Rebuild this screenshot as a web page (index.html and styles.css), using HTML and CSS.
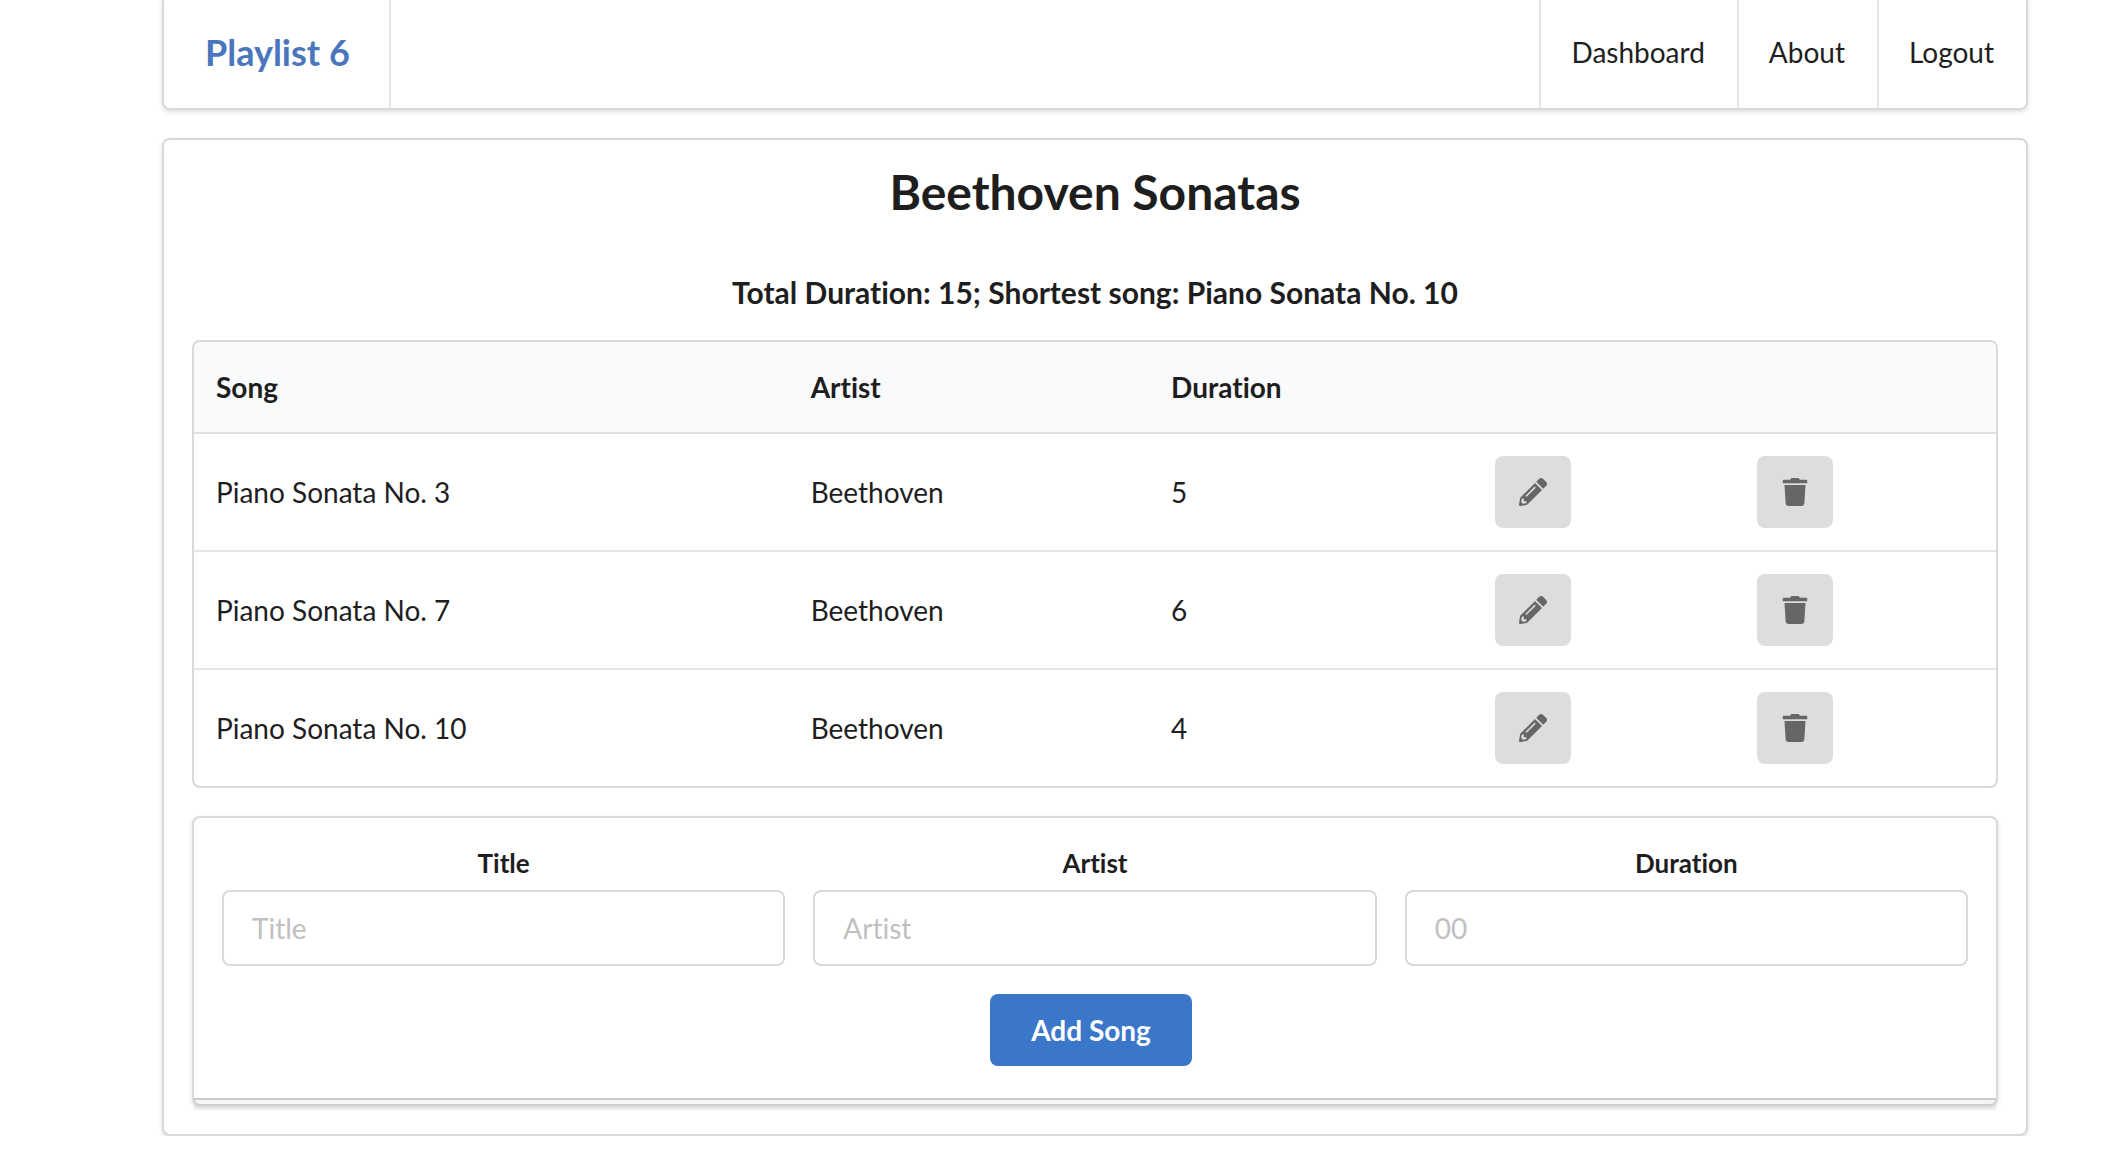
FILE: index.html
```html
<!DOCTYPE html>
<html lang="en">
<head>
<meta charset="utf-8">
<title>Playlist 6</title>
<link rel="stylesheet" href="styles.css">
</head>
<body>
<svg class="sprite" aria-hidden="true">
  <symbol id="pencil" viewBox="0 0 512 512">
    <path d="M497.9 142.1l-46.1 46.1c-4.700 4.700-12.300 4.700-17 0l-111-111c-4.700-4.700-4.700-12.300 0-17l46.100-46.100c18.700-18.700 49.100-18.700 67.900 0l60.100 60.100c18.800 18.700 18.800 49.100 0 67.900zM284.200 99.800L21.600 362.400.4 483.900c-2.900 16.400 11.400 30.600 27.800 27.800l121.500-21.300 262.600-262.600c4.700-4.700 4.700-12.300 0-17l-111-111c-4.800-4.700-12.400-4.700-17.100 0zM124.100 339.900c-5.500-5.500-5.500-14.300 0-19.800l154-154c5.500-5.500 14.300-5.500 19.800 0s5.500 14.300 0 19.800l-154 154c-5.500 5.500-14.300 5.500-19.800 0zM88 424h48v36.300l-64.500 11.300-31.100-31.100L51.700 376H88v48z"/>
  </symbol>
  <symbol id="trash" viewBox="0 0 448 512">
    <path d="M432 32H312l-9.400-18.700A24 24 0 0 0 281.100 0H166.800a23.720 23.720 0 0 0-21.400 13.300L136 32H16A16 16 0 0 0 0 48v32a16 16 0 0 0 16 16h416a16 16 0 0 0 16-16V48a16 16 0 0 0-16-16zM53.200 467a48 48 0 0 0 47.900 45h245.800a48 48 0 0 0 47.900-45L416 128H32z"/>
  </symbol>
</svg>
<div class="page">
  <nav class="menu">
    <a class="item brand" href="#">Playlist 6</a>
    <div class="menu-right">
      <a class="item" href="#">Dashboard</a>
      <a class="item" href="#">About</a>
      <a class="item" href="#">Logout</a>
    </div>
  </nav>
  <main class="segment">
    <h1 class="title">Beethoven Sonatas</h1>
    <h2 class="summary">Total Duration: 15; Shortest song: Piano Sonata No. 10</h2>
    <table class="songs">
      <colgroup><col class="col-song"><col class="col-artist"><col class="col-duration"><col><col></colgroup>
      <thead>
        <tr><th>Song</th><th>Artist</th><th>Duration</th><th></th><th></th></tr>
      </thead>
      <tbody>
        <tr>
          <td>Piano Sonata No. 3</td><td>Beethoven</td><td>5</td>
          <td><button class="icon-button" type="button" aria-label="Edit"><svg class="icon"><use href="#pencil"/></svg></button></td>
          <td><button class="icon-button" type="button" aria-label="Delete"><svg class="icon"><use href="#trash"/></svg></button></td>
        </tr>
        <tr>
          <td>Piano Sonata No. 7</td><td>Beethoven</td><td>6</td>
          <td><button class="icon-button" type="button" aria-label="Edit"><svg class="icon"><use href="#pencil"/></svg></button></td>
          <td><button class="icon-button" type="button" aria-label="Delete"><svg class="icon"><use href="#trash"/></svg></button></td>
        </tr>
        <tr>
          <td>Piano Sonata No. 10</td><td>Beethoven</td><td>4</td>
          <td><button class="icon-button" type="button" aria-label="Edit"><svg class="icon"><use href="#pencil"/></svg></button></td>
          <td><button class="icon-button" type="button" aria-label="Delete"><svg class="icon"><use href="#trash"/></svg></button></td>
        </tr>
      </tbody>
    </table>
    <form class="segment song-form">
      <div class="fields">
        <div class="field"><label for="title">Title</label><input id="title" type="text" placeholder="Title"></div>
        <div class="field"><label for="artist">Artist</label><input id="artist" type="text" placeholder="Artist"></div>
        <div class="field"><label for="duration">Duration</label><input id="duration" type="text" placeholder="00"></div>
      </div>
      <button class="primary" type="submit">Add Song</button>
      <div class="form-footer"></div>
    </form>
  </main>
</div>
</body>
</html>
```
FILE: styles.css
```css
* { box-sizing: border-box; }

body {
  margin: 0;
  background: #fff;
  color: #1e1e1f;
  font-family: Lato, "Liberation Sans", sans-serif;
  font-size: 28px;
  font-variant-ligatures: none;
  line-height: 36px;
}

.sprite { display: none; }

.page {
  display: flex;
  flex-direction: column;
  gap: 28px;
  padding: 0 96px 0 162px;
}

/* The bar is scrolled slightly under the top edge of the window. */
.menu {
  display: flex;
  justify-content: space-between;
  height: 116px;
  margin-top: -6px;
  border: 2px solid #d8d9d9;
  border-radius: 8px;
  box-shadow: 0 2px 4px rgba(34, 36, 38, .15);
}

.menu-right { display: flex; }

.item {
  display: flex;
  align-items: center;
  padding: 0 32px;
  color: inherit;
  text-decoration: none;
}

.menu-right .item { box-shadow: inset 2px 0 #e6e6e7; }

.brand {
  padding: 0 41px;
  box-shadow: inset -2px 0 #e6e6e7;
  color: #4a76bd;
  font-size: 36px;
  font-weight: 700;
}

.segment {
  padding: 28px;
  border: 2px solid #d8d9d9;
  border-radius: 8px;
  background: #fff;
  box-shadow: 0 2px 4px rgba(34, 36, 38, .15);
}

.title {
  margin: 0 0 54px;
  font-size: 48px;
  line-height: 48px;
  text-align: center;
}

.summary {
  margin: 0 0 26px;
  font-size: 30px;
  line-height: 44px;
  text-align: center;
}

.songs {
  width: 100%;
  margin-bottom: 28px;
  border: 2px solid #d8d9d9;
  border-radius: 8px;
  border-spacing: 0;
  table-layout: fixed;
  text-align: left;
  overflow: hidden;
}

.col-song { width: 33%; }
.col-artist { width: 20%; }
.col-duration { width: 18%; }

.songs th {
  height: 92px;
  padding: 0 22px;
  border-bottom: 2px solid #dedfdf;
  background: #f9fafb;
}

.songs td {
  padding: 22px;
  border-bottom: 2px solid #e6e6e7;
}

.songs tbody tr:last-child td { border-bottom: 0; }

.icon-button {
  display: flex;
  align-items: center;
  justify-content: center;
  width: 76px;
  height: 72px;
  padding: 0;
  border: 0;
  border-radius: 8px;
  background: #dcddde;
  color: #666;
}

.icon {
  width: 28px;
  height: 28px;
  fill: currentColor;
}

.song-form {
  display: flex;
  flex-direction: column;
  padding-bottom: 0;
}

.fields {
  display: grid;
  grid-template-columns: repeat(3, 1fr);
  gap: 28px;
  margin-bottom: 28px;
}

.field {
  display: flex;
  flex-direction: column;
  gap: 10px;
}

.field label {
  font-size: 26px;
  font-weight: 700;
  line-height: 34px;
  text-align: center;
}

.field input {
  width: 100%;
  height: 76px;
  padding: 0 28px;
  border: 2px solid #d8d9d9;
  border-radius: 8px;
  background: #fff;
  color: inherit;
  font: inherit;
}

.field input::placeholder { color: #c0c0c0; opacity: 1; }

.primary {
  align-self: center;
  height: 72px;
  margin: 0 8px 32px 0;
  padding: 0 41px;
  border: 0;
  border-radius: 8px;
  background: #3a77c9;
  color: #fff;
  font: inherit;
  font-weight: 700;
}

/* Collapsed message strip that overlaps the form's lower border. */
.form-footer {
  height: 12px;
  margin: 0 -28px -6px;
  border-top: 2px solid rgba(34, 36, 38, .2);
  background: rgba(0, 0, 0, .04);
}
```
